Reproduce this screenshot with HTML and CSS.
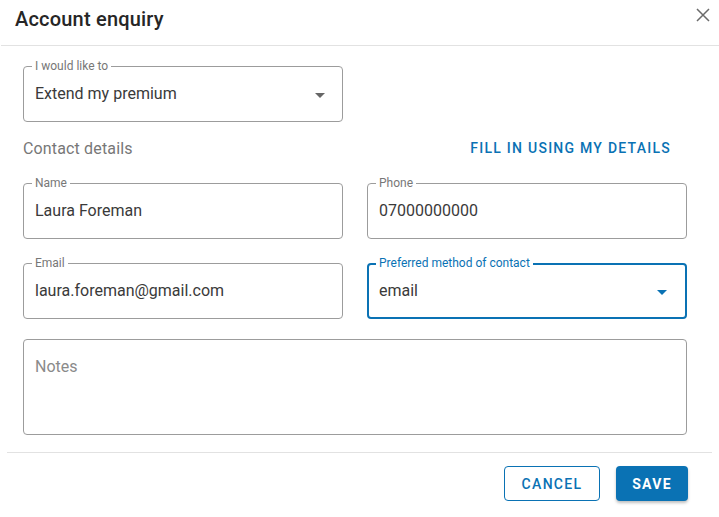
FILE: index.html
```html
<!DOCTYPE html>
<html lang="en">
<head>
<meta charset="utf-8">
<title>Account enquiry</title>
<link rel="stylesheet" href="styles.css">
</head>
<body>
<div class="dialog">
  <header class="dialog-header">
    <h1 class="dialog-title">Account enquiry</h1>
    <button class="close-btn" aria-label="Close">
      <svg width="14" height="14" viewBox="0 0 14 14"><path d="M1 1L13 13M13 1L1 13" stroke="#6b6b6b" stroke-width="1.5" fill="none"/></svg>
    </button>
  </header>

  <div class="dialog-content">
    <div class="field field-half">
      <span class="field-label">I would like to</span>
      <span class="field-value">Extend my premium</span>
      <span class="caret"></span>
    </div>

    <div class="section-row">
      <span class="section-title">Contact details</span>
      <a class="text-btn" href="#">FILL IN USING MY DETAILS</a>
    </div>

    <div class="field-grid">
      <div class="field">
        <span class="field-label">Name</span>
        <span class="field-value">Laura Foreman</span>
      </div>
      <div class="field">
        <span class="field-label">Phone</span>
        <span class="field-value">07000000000</span>
      </div>
      <div class="field">
        <span class="field-label">Email</span>
        <span class="field-value">laura.foreman@gmail.com</span>
      </div>
      <div class="field field-focused">
        <span class="field-label">Preferred method of contact</span>
        <span class="field-value">email</span>
        <span class="caret"></span>
      </div>
    </div>

    <div class="notes">
      <span class="placeholder">Notes</span>
    </div>
  </div>

  <div class="divider"></div>

  <footer class="dialog-actions">
    <button class="btn btn-outline">CANCEL</button>
    <button class="btn btn-primary">SAVE</button>
  </footer>
</div>
</body>
</html>
```

FILE: styles.css
```css
* { box-sizing: border-box; }

html, body {
  margin: 0;
  padding: 0;
  background: #ffffff;
  font-family: Roboto, "Liberation Sans", Arial, sans-serif;
  color: #333333;
}

.dialog {
  width: 719px;
  height: 517px;
  background: #fff;
}

.dialog-header {
  height: 46px;
  display: flex;
  align-items: flex-start;
  justify-content: space-between;
  border-bottom: 1px solid #e2e2e2;
  margin-left: 1px;
  padding: 7px 9px 0 14px;
}

.dialog-title {
  margin: 0;
  font-size: 20px;
  font-weight: 500;
  line-height: 24px;
  color: #262626;
  letter-spacing: 0.2px;
}

.close-btn {
  border: 0;
  background: none;
  padding: 0;
  width: 14px;
  height: 14px;
  margin-top: 1px;
  display: flex;
}

.dialog-content {
  padding: 20px 32px 0 23px;
}

.field {
  position: relative;
  height: 56px;
  border: 1px solid #9c9c9c;
  border-radius: 4px;
  display: flex;
  align-items: center;
  padding: 0 11px 2px;
}

.field-half { width: 320px; }

.field-label {
  position: absolute;
  top: -8px;
  left: 8px;
  padding: 0 3px;
  background: #fff;
  font-size: 12px;
  line-height: 14px;
  color: #777;
}

.field-value {
  font-size: 16px;
  line-height: 19px;
  color: #3a3a3a;
}

.caret {
  position: absolute;
  right: 17px;
  top: 26px;
  width: 0;
  height: 0;
  border-left: 5px solid transparent;
  border-right: 5px solid transparent;
  border-top: 5px solid #666;
}

.field-focused {
  border: 2px solid #0a72b4;
  padding: 0 10px 2px;
}
.field-focused .field-label {
  top: -9px;
  left: 7px;
  color: #0a72b4;
}
.field-focused .caret {
  right: 18px;
  top: 25px;
  border-top-color: #0a72b4;
}

.section-row {
  display: flex;
  align-items: center;
  justify-content: space-between;
  height: 36px;
  margin: 8px 0 17px;
}

.section-title {
  font-size: 16px;
  color: #777;
  letter-spacing: 0.15px;
}

.text-btn {
  font-size: 14px;
  font-weight: 500;
  letter-spacing: 1.25px;
  color: #0a72b4;
  text-decoration: none;
  margin-right: 16px;
}

.field-grid {
  display: grid;
  grid-template-columns: 320px 320px;
  column-gap: 24px;
  row-gap: 24px;
}

.notes {
  margin-top: 20px;
  height: 96px;
  border: 1px solid #9c9c9c;
  border-radius: 4px;
  padding: 17px 11px;
  width: 664px;
}

.placeholder {
  font-size: 16px;
  line-height: 19px;
  color: #8a8a8a;
}

.divider {
  height: 1px;
  background: #e2e2e2;
  margin: 17px 7px 0;
}

.dialog-actions {
  display: flex;
  justify-content: flex-end;
  gap: 16px;
  padding: 13px 31px 0 0;
}

.btn {
  font-family: Roboto, "Liberation Sans", Arial, sans-serif;
  font-size: 14px;
  font-weight: 500;
  letter-spacing: 1.3px;
  height: 35px;
  border-radius: 4px;
  cursor: pointer;
}

.btn-outline {
  width: 96px;
  background: #fff;
  border: 1px solid #0a72b4;
  color: #0a72b4;
}

.btn-primary {
  width: 72px;
  background: #0a72b4;
  border: none;
  color: #fff;
  font-weight: 700;
  box-shadow: 0 2px 3px rgba(0,0,0,0.25);
}
```
